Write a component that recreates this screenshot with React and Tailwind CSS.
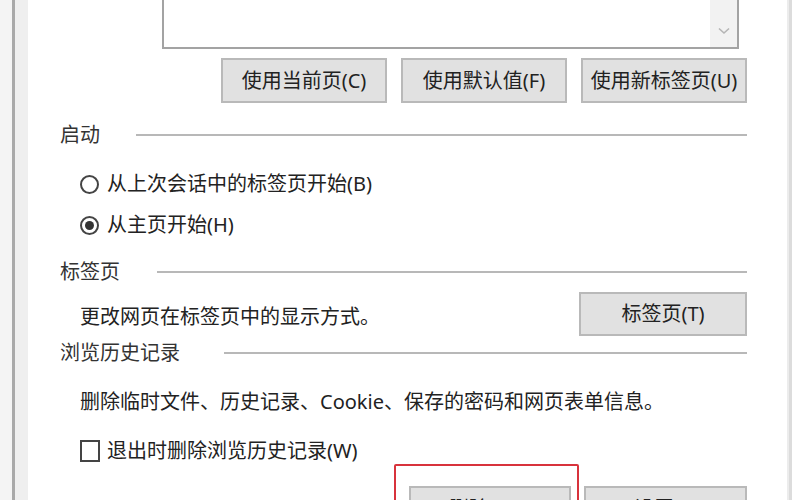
import React from 'react';

const font = { fontFamily: '"Noto Sans", "Noto Sans CJK SC", sans-serif' };

const Btn = ({ children, className = '' }) => (
  <div className={`flex items-center justify-center shrink-0 bg-[#e1e1e1] border-2 border-[#b9b9b9] text-[20px] text-[#222] ${className}`}>
    {children}
  </div>
);

const Header = ({ label, className = '' }) => (
  <div className={`flex items-center h-[30px] shrink-0 ${className}`}>
    <span className="text-[20px] text-[#333] shrink-0">{label}</span>
    <div className="flex-1 h-[2px] bg-[#b8b8b8]" />
  </div>
);

export default function App() {
  return (
    <div className="w-[800px] h-[500px] overflow-hidden bg-white flex" style={font}>
      {/* 左侧窗口边框 */}
      <div className="w-[12px] bg-[#f4f4f4] shrink-0" />
      <div className="w-[3px] bg-[#a9a9a9] shrink-0" />
      <div className="w-[13px] bg-[#efefef] shrink-0" />

      <div className="flex-1 flex flex-col pl-[32px] pr-[40px]">
        {/* 主页地址框 */}
        <div className="ml-[102px] mr-[8px] h-[49px] shrink-0 border-2 border-t-0 border-[#a3a3a3] flex justify-end">
          <div className="w-[27px] bg-[#f2f2f2] flex items-end justify-center pb-[12px]">
            <svg width="12" height="8" viewBox="0 0 12 8">
              <path d="M1 1.5 L6 6 L11 1.5" fill="none" stroke="#b5b5b5" strokeWidth="1.6" />
            </svg>
          </div>
        </div>

        <div className="flex justify-end gap-[14px] mt-[9px] shrink-0">
          <Btn className="w-[166px] h-[45px]">使用当前页(C)</Btn>
          <Btn className="w-[166px] h-[45px]">使用默认值(F)</Btn>
          <Btn className="w-[166px] h-[45px]">使用新标签页(U)</Btn>
        </div>

        <Header label={<span className="mr-[36px]">启动</span>} className="mt-[17px]" />

        <div className="flex items-center h-[24px] shrink-0 mt-[22px] ml-[20px] text-[20px] text-[#222]">
          <span className="w-[19px] h-[19px] rounded-full border-2 border-[#444] mr-[8px]" />
          从上次会话中的标签页开始(B)
        </div>
        <div className="flex items-center h-[24px] shrink-0 mt-[17px] ml-[20px] text-[20px] text-[#222]">
          <span className="w-[19px] h-[19px] rounded-full border-2 border-[#444] mr-[8px] flex items-center justify-center">
            <span className="w-[9px] h-[9px] rounded-full bg-[#333]" />
          </span>
          从主页开始(H)
        </div>

        <Header label={<span className="mr-[37px]">标签页</span>} className="mt-[20px]" />

        <div className="flex items-center justify-between shrink-0 mt-[5px] ml-[20px]">
          <span className="text-[20px] text-[#222] pt-[6px]">更改网页在标签页中的显示方式。</span>
          <Btn className="w-[168px] h-[44px]">标签页(T)</Btn>
        </div>

        <Header label={<span className="mr-[44px]">浏览历史记录</span>} className="mt-[2px]" />

        <div className="h-[24px] flex items-center shrink-0 mt-[22px] ml-[20px] text-[20px] text-[#222]">
          删除临时文件、历史记录、Cookie、保存的密码和网页表单信息。
        </div>

        <div className="flex items-center h-[24px] shrink-0 mt-[25px] ml-[20px] text-[20px] text-[#222]">
          <span className="w-[20px] h-[22px] border-2 border-[#444] mr-[7px]" />
          退出时删除浏览历史记录(W)
        </div>

        <div className="flex justify-end items-start gap-[5px] mt-[1px] shrink-0">
          <div className="w-[185px] h-[80px] border-2 border-[#d8333c] rounded-[2px] pt-[20px] pl-[13px] pr-[6px] shrink-0">
            <Btn className="w-[162px] h-[45px]">删除(D)...</Btn>
          </div>
          <Btn className="w-[163px] h-[45px] mt-[22px]">设置(S)</Btn>
        </div>
      </div>

      {/* 右侧窗口边框 */}
      <div className="w-[2px] bg-[#ececec] shrink-0" />
      <div className="w-[3px] bg-[#dcdcdc] shrink-0" />
      <div className="w-[8px] bg-white shrink-0" />
    </div>
  );
}
